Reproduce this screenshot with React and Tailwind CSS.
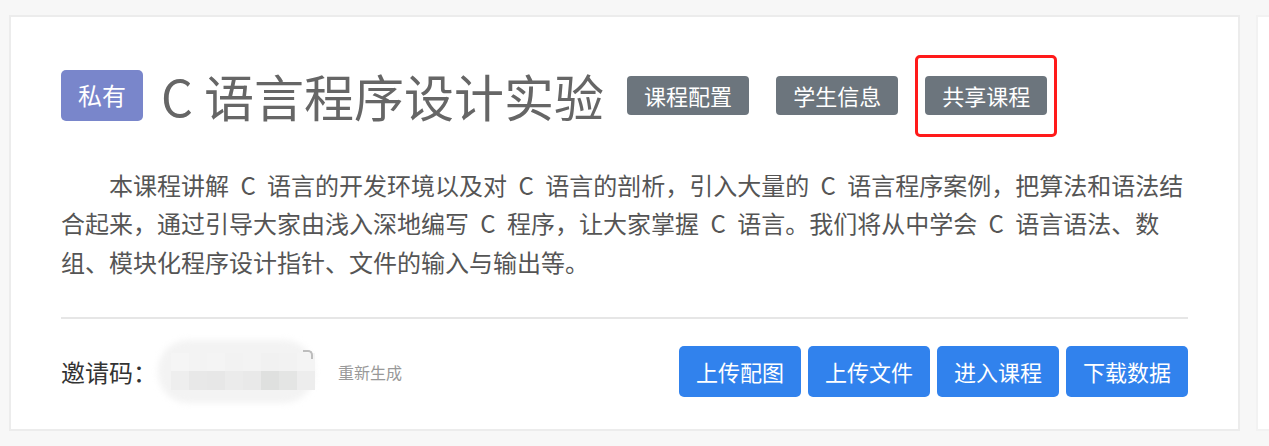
export default function App() {
  const grayBtn =
    "bg-[#6c757d] text-white text-[22px] leading-[29px] px-[17px] py-[5px] rounded-[4px] whitespace-nowrap";
  const blueBtn =
    "bg-[#3182ed] text-white text-[22px] leading-[29px] px-[17px] py-[11px] rounded-[5px] whitespace-nowrap";
  const topRow = ["#f5f5f5", "#f3f3f3", "#f4f4f4", "#f2f2f2", "#f3f3f3", "#f1f1f1", "#f2f2f2", "#f4f4f4"];
  const botRow = ["#eeeeee", "#e8e8e8", "#e7e7e7", "#ebebeb", "#e9e9e9", "#dfe0df", "#e4e5e4", "#ededed"];
  return (
    <div className="w-full h-[446px] overflow-hidden bg-[#f7f7f7] pt-[15px] pl-[9px] flex gap-[16px] font-['Noto_Sans_CJK_SC','Microsoft_YaHei',sans-serif]">
      <div className="w-[1231px] h-[416px] shrink-0 bg-white border-2 border-[#ececec] px-[50px] pt-[43px]">
        <div className="flex items-center">
          <span className="bg-[#7986cb] text-white text-[24px] leading-[36px] px-[17px] py-[7.5px] rounded-[5px]">
            私有
          </span>
          <h1 className="ml-[18px] text-[50px] leading-[70px] text-[#666666] whitespace-nowrap">
            C 语言程序设计实验
          </h1>
          <div className="ml-[23px] flex gap-[27px]">
            <span className={grayBtn}>课程配置</span>
            <span className={grayBtn}>学生信息</span>
            <span className="relative">
              <span className={grayBtn + " block"}>共享课程</span>
              <span className="absolute -left-[10px] -right-[10px] -top-[21px] -bottom-[22px] border-[3px] border-[#ff1a1a] rounded-[5px]"></span>
            </span>
          </div>
        </div>
        <p className="mt-[36px] text-[24px] leading-[38.4px] indent-[48px] text-[#555555] [word-spacing:6px]">
          本课程讲解 C 语言的开发环境以及对 C 语言的剖析，引入大量的 C 语言程序案例，把算法和语法结合起来，通过引导大家由浅入深地编写 C 程序，让大家掌握 C 语言。我们将从中学会 C 语言语法、数组、模块化程序设计指针、文件的输入与输出等。
        </p>
        <div className="mt-[36px] h-[2px] bg-[#e6e6e6]"></div>
        <div className="mt-[27px] flex items-center justify-between">
          <div className="flex items-center">
            <span className="text-[24px] leading-[36px] text-[#333333]">邀请码：</span>
            <div className="relative -my-[6px] ml-[1px] w-[156px] h-[63px]">
              <div className="absolute inset-0 rounded-[30px] bg-[#f3f3f3] blur-[3px]"></div>
              <div className="absolute left-[13px] top-[13px] flex flex-col">
                <div className="flex">
                  {topRow.map((c, i) => (
                    <div key={i} className="w-[18px] h-[18px]" style={{ background: c }}></div>
                  ))}
                </div>
                <div className="flex">
                  {botRow.map((c, i) => (
                    <div key={i} className="w-[18px] h-[19px]" style={{ background: c }}></div>
                  ))}
                </div>
              </div>
              <div className="absolute right-[1px] top-[10px] w-[10px] h-[9px] border-t-2 border-r-2 border-[#bdbdbd] rounded-tr-[5px]"></div>
            </div>
            <span className="ml-[24px] text-[16px] leading-[24px] text-[#999999]">重新生成</span>
          </div>
          <div className="flex gap-[7px]">
            <span className={blueBtn}>上传配图</span>
            <span className={blueBtn}>上传文件</span>
            <span className={blueBtn}>进入课程</span>
            <span className={blueBtn}>下载数据</span>
          </div>
        </div>
      </div>
      <div className="w-[300px] h-[416px] shrink-0 bg-white border-2 border-[#f2f2f2]"></div>
    </div>
  );
}
